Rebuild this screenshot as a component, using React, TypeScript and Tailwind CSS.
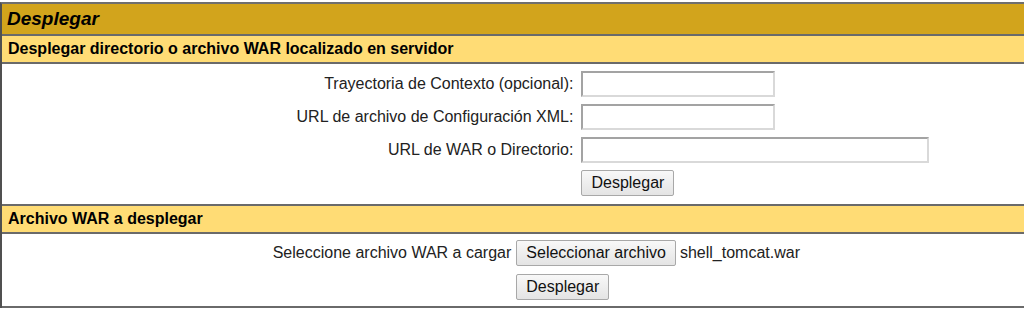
import React from 'react';

const font = { fontFamily: '"Liberation Sans", Arial, sans-serif' };

function Field({ w }: { w: string }) {
  return (
    <div
      className={`${w} h-[26px] bg-white border-2 border-t-[#a3a3a3] border-l-[#a3a3a3] border-r-[#d9d9d9] border-b-[#d9d9d9]`}
    />
  );
}

function Btn({ children }: { children: React.ReactNode }) {
  return (
    <button className="h-[26px] px-[9px] rounded-[2px] border border-[#a8a8a8] bg-gradient-to-b from-[#f8f8f8] to-[#e4e4e4] text-[16px] text-[#111] leading-none">
      {children}
    </button>
  );
}

function Header({ children }: { children: React.ReactNode }) {
  return (
    <div className="h-[28px] flex items-center px-[6px] bg-[#FFDC75] text-[16px] font-bold text-black border-b-2 border-b-[#6a6a6a]">
      {children}
    </div>
  );
}

export default function App() {
  return (
    <div className="w-[1024px] h-[309px] overflow-hidden bg-white" style={font}>
      <div className="w-[1224px] mt-[2px] border-t-2 border-t-[#6f6f6f] border-l-2 border-l-[#505050]">
        <div className="h-[32px] flex items-center px-[5px] bg-[#D2A41C] text-[19px] font-bold italic text-black border-b-2 border-b-[#6a6a6a]">
          Desplegar
        </div>
        <Header>Desplegar directorio o archivo WAR localizado en servidor</Header>

        <div className="h-[142px] pt-[7px] flex justify-center border-b-2 border-b-[#6a6a6a]">
          <div className="grid grid-cols-[auto_auto] gap-x-2 gap-y-[7px] items-center text-[16px] text-[#222] h-fit">
            <span className="text-right">Trayectoria de Contexto (opcional):</span>
            <Field w="w-[194px]" />
            <span className="text-right">URL de archivo de Configuración XML:</span>
            <Field w="w-[194px]" />
            <span className="text-right">URL de WAR o Directorio:</span>
            <Field w="w-[348px]" />
            <span />
            <div>
              <Btn>Desplegar</Btn>
            </div>
          </div>
        </div>

        <Header>Archivo WAR a desplegar</Header>

        <div className="h-[74px] pt-[6px] flex justify-center border-b-2 border-b-[#6a6a6a]">
          <div className="grid grid-cols-[auto_437px] gap-x-[5px] gap-y-[8px] items-center text-[16px] text-[#222] h-fit">
            <span className="text-right">Seleccione archivo WAR a cargar</span>
            <div className="flex items-center gap-[4px]">
              <Btn>Seleccionar archivo</Btn>
              <span>shell_tomcat.war</span>
            </div>
            <span />
            <div>
              <Btn>Desplegar</Btn>
            </div>
          </div>
        </div>
      </div>
    </div>
  );
}
